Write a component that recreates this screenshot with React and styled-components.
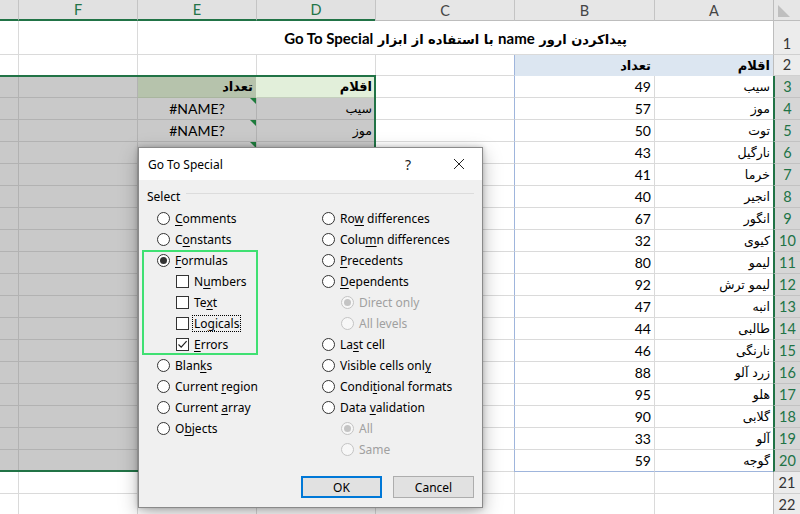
import React from 'react';
import styled, { createGlobalStyle } from 'styled-components';

const GREEN = '#217346';

const Global = createGlobalStyle`
  html, body { margin: 0; padding: 0; background: #fff; }
  body { width: 800px; height: 514px; overflow: hidden; }
`;

const Sheet = styled.div`
  position: relative;
  width: 800px;
  height: 514px;
  overflow: hidden;
  direction: rtl;
  background: #fff;
`;

const Grid = styled.div`
  position: relative;
  display: grid;
  grid-template-columns: 27px 119px 140px 139px 119px 119px 119px 119px;
  grid-template-rows: 21px 34px 21px repeat(20, 22px);
  font-family: Lato, "DejaVu Sans", sans-serif;
  font-size: 14px;
  color: #000;
`;

const Corner = styled.div`
  box-sizing: border-box;
  background: #e6e6e6;
  border-left: 1px solid #bdbdbd;
  border-bottom: 1px solid #bdbdbd;
  position: relative;
  svg { position: absolute; left: 3px; top: 4px; }
`;

const ColHead = styled.div`
  box-sizing: border-box;
  background: ${p => (p.$sel ? '#e1e1e1' : '#e6e6e6')};
  color: ${p => (p.$sel ? GREEN : '#444')};
  border-left: 1px solid #c4c4c4;
  border-bottom: ${p => (p.$sel ? `2px solid ${GREEN}` : '1px solid #bdbdbd')};
  display: flex;
  align-items: center;
  justify-content: center;
  font-size: 14.5px;
`;

const RowHead = styled.div`
  box-sizing: border-box;
  background: ${p => (p.$sel ? '#d6d6d6' : '#ececec')};
  color: ${p => (p.$sel ? GREEN : '#333')};
  border-left: ${p => (p.$sel ? `2px solid ${GREEN}` : '1px solid #bdbdbd')};
  border-bottom: 1px solid ${p => (p.$sel ? '#c2c2c2' : '#d0d0d0')};
  display: flex;
  align-items: flex-end;
  justify-content: center;
  padding-bottom: 2px;
  font-size: 14.5px;
`;

const Cell = styled.div`
  position: relative;
  box-sizing: border-box;
  background: ${p => p.$bg};
  border-left: 1px solid ${p => p.$left};
  border-bottom: 1px solid ${p => p.$bottom};
  display: flex;
  align-items: center;
  justify-content: ${p => (p.$center ? 'center' : 'flex-start')};
  padding: 0 3px;
  white-space: nowrap;
  overflow: hidden;
  font-weight: ${p => (p.$bold ? 700 : 400)};
`;

const TitleCell = styled(Cell)`
  grid-column: 2 / 7;
  justify-content: center;
  font-size: 15px;
  font-weight: 700;
`;

const Fa = styled.span`
  font-family: "DejaVu Sans", sans-serif;
  font-size: ${p => (p.$big ? '13px' : '12.5px')};
`;

const Ltr = styled.span`
  direction: ltr;
  unicode-bidi: isolate;
`;

const ErrorMark = styled.span`
  position: absolute;
  top: 0;
  right: 0;
  width: 0;
  height: 0;
  border-top: 6px solid #1e7b3c;
  border-left: 6px solid transparent;
`;

const Selection = styled.div`
  grid-row: 4 / 22;
  grid-column: 5 / 9;
  position: absolute;
  top: -1px;
  right: -1px;
  bottom: 0;
  left: 0;
  z-index: 2;
  border: 2px solid ${GREEN};
  pointer-events: none;
`;

/* ---------- dialog ---------- */

const Dialog = styled.div`
  position: absolute;
  left: 138px;
  top: 147px;
  width: 345px;
  height: 361px;
  box-sizing: border-box;
  border: 1px solid #8a8a8a;
  background: #f0f0f0;
  direction: ltr;
  display: flex;
  flex-direction: column;
  z-index: 10;
  box-shadow: 0 6px 18px rgba(0, 0, 0, 0.28), 0 0 5px rgba(0, 0, 0, 0.22);
  font-family: "Noto Sans", sans-serif;
  font-size: 12px;
  color: #000;
`;

const TitleBar = styled.div`
  height: 32px;
  background: #fff;
  display: flex;
  align-items: center;
  padding-left: 9px;
`;

const TitleText = styled.div`
  flex: 1;
`;

const TitleButton = styled.div`
  width: 46px;
  height: 32px;
  display: flex;
  align-items: center;
  justify-content: center;
  margin-left: ${p => (p.$gap ? '5px' : '0')};
  font-size: 14px;
  color: #222;
`;

const Body = styled.div`
  flex: 1;
  display: flex;
  flex-direction: column;
  padding: 6px 8px 9px 8px;
`;

const Legend = styled.div`
  display: flex;
  height: 20px;
  align-items: center;
`;

const LegendLine = styled.div`
  flex: 1;
  height: 1px;
  background: #dcdcdc;
  align-self: flex-start;
  margin: 7px 0 0 6px;
`;

const Options = styled.div`
  display: grid;
  grid-template-columns: 165px 1fr;
  margin-top: 2px;
  padding-left: 10px;
`;

const Column = styled.div`
  display: flex;
  flex-direction: column;
`;

const Group = styled.div`
  display: flex;
  flex-direction: column;
  margin-left: -15px;
  padding-left: 15px;
  width: 116px;
  box-sizing: border-box;
  outline: 2px solid #3fe072;
  outline-offset: -2px;
`;

const Row = styled.div`
  height: 21px;
  display: flex;
  align-items: center;
  gap: 5px;
  padding-left: ${p => (p.$indent ? '19px' : '0')};
  color: ${p => (p.$disabled ? '#a0a0a0' : '#000')};
  white-space: nowrap;
`;

const Radio = styled.span`
  width: 13px;
  height: 13px;
  box-sizing: border-box;
  border-radius: 50%;
  border: 1px solid ${p => (p.$disabled ? '#c4c4c4' : '#333')};
  background: ${p => (p.$disabled ? '#f7f7f7' : '#fff')};
  display: flex;
  align-items: center;
  justify-content: center;
  flex: none;
  &::after {
    content: '';
    width: 7px;
    height: 7px;
    border-radius: 50%;
    background: ${p => (p.$disabled ? '#c4c4c4' : '#333')};
    display: ${p => (p.$checked ? 'block' : 'none')};
  }
`;

const Box = styled.span`
  width: 13px;
  height: 13px;
  box-sizing: border-box;
  border: 1px solid #333;
  background: #fff;
  display: flex;
  align-items: center;
  justify-content: center;
  flex: none;
`;

const Text = styled.span`
  outline: ${p => (p.$focus ? '1px dotted #000' : 'none')};
  outline-offset: 0;
  padding: 0 1px;
  margin-left: -1px;
  line-height: 15px;
`;

const Key = styled.span`
  text-decoration: underline;
  text-underline-offset: 2px;
`;

const Footer = styled.div`
  margin-top: auto;
  display: flex;
  justify-content: flex-end;
  gap: 11px;
`;

const Button = styled.div`
  width: 81px;
  height: 22px;
  box-sizing: border-box;
  background: #e1e1e1;
  border: 1px solid ${p => (p.$primary ? '#0078d7' : '#adadad')};
  box-shadow: ${p => (p.$primary ? 'inset 0 0 0 1px #0078d7' : 'none')};
  display: flex;
  align-items: center;
  justify-content: center;
`;

const Label = ({ text }) => {
  const i = text.indexOf('&');
  if (i < 0) return text;
  return (
    <>
      {text.slice(0, i)}
      <Key>{text[i + 1]}</Key>
      {text.slice(i + 2)}
    </>
  );
};

const RadioRow = ({ text, checked, disabled, indent }) => (
  <Row $disabled={disabled} $indent={indent}>
    <Radio $checked={checked} $disabled={disabled} />
    <Text>
      <Label text={text} />
    </Text>
  </Row>
);

const CheckRow = ({ text, checked, focus }) => (
  <Row $indent>
    <Box>
      {checked && (
        <svg width="11" height="11" viewBox="0 0 11 11">
          <path d="M1.5 5.5 L4.2 8.2 L9.6 2.2" fill="none" stroke="#222" strokeWidth="1.2" />
        </svg>
      )}
    </Box>
    <Text $focus={focus}>
      <Label text={text} />
    </Text>
  </Row>
);

/* ---------- data ---------- */

const fruits = ['سیب', 'موز', 'توت', 'نارگیل', 'خرما', 'انجیر', 'انگور', 'کیوی', 'لیمو', 'لیمو ترش', 'انبه', 'طالبی', 'نارنگی', 'زرد آلو', 'هلو', 'گلابی', 'آلو', 'گوجه'];
const counts = [49, 57, 50, 43, 41, 40, 67, 32, 80, 92, 47, 44, 46, 88, 95, 90, 33, 59];
const cols = ['A', 'B', 'C', 'D', 'E', 'F', 'G'];
const selCols = new Set(['D', 'E', 'F', 'G']);
const TABLE = '#9fb5dc';

function cellInfo(r, c) {
  const sel = r >= 3 && r <= 20 && selCols.has(c);
  const info = {
    bg: sel ? '#c9c9c9' : '#fff',
    left: sel ? '#b2b2b2' : '#dadada',
    bottom: sel ? '#b2b2b2' : '#dadada',
    content: null,
    bold: false,
    center: false,
    err: false,
  };
  if (r === 2 && (c === 'A' || c === 'B')) {
    info.bg = '#dce6f1';
    info.left = '#dce6f1';
    info.bottom = '#dce6f1';
    info.bold = true;
    info.content = <Fa $big>{c === 'A' ? 'اقلام' : 'تعداد'}</Fa>;
  }
  if (r >= 3 && r <= 20) {
    if (c === 'A') info.content = <Fa>{fruits[r - 3]}</Fa>;
    if (c === 'B') info.content = counts[r - 3];
  }
  if (c === 'B' && r >= 2 && r <= 20) info.left = TABLE;
  if ((c === 'A' || c === 'B') && r === 20) info.bottom = TABLE;
  if (r === 3 && c === 'D') {
    info.bg = '#e2efda';
    info.left = '#e2efda';
    info.bottom = '#c4cfbd';
    info.bold = true;
    info.content = <Fa $big>اقلام</Fa>;
  }
  if (r === 3 && c === 'E') {
    info.bg = '#b6c3ac';
    info.bottom = '#a9b59f';
    info.bold = true;
    info.content = <Fa $big>تعداد</Fa>;
  }
  if (r >= 4 && r <= 20 && c === 'D') info.content = <Fa>{fruits[r - 4]}</Fa>;
  if (r >= 4 && r <= 20 && c === 'E') {
    info.content = <Ltr>#NAME?</Ltr>;
    info.center = true;
    info.err = true;
  }
  return info;
}

const rows = Array.from({ length: 21 }, (_, i) => i + 2);

export default function App() {
  return (
    <>
      <Global />
      <Sheet>
        <Grid>
          <Corner>
            <svg width="14" height="14" viewBox="0 0 14 14">
              <path d="M1 1 L1 13 L13 13 Z" fill="#bfbfbf" />
            </svg>
          </Corner>
          {cols.map(c => (
            <ColHead key={c} $sel={selCols.has(c)}>
              {c}
            </ColHead>
          ))}

          <RowHead>1</RowHead>
          <TitleCell $bg="#fff" $left="#dadada" $bottom="#dadada">
            <span>
              <Fa $big>پیداکردن ارور </Fa>name<Fa $big> با استفاده از ابزار </Fa>Go To Special
            </span>
          </TitleCell>
          <Cell $bg="#fff" $left="#dadada" $bottom="#dadada" />
          <Cell $bg="#fff" $left="#dadada" $bottom="#dadada" />

          {rows.map(r => (
            <React.Fragment key={r}>
              <RowHead $sel={r >= 3 && r <= 20}>{r}</RowHead>
              {cols.map(c => {
                const info = cellInfo(r, c);
                return (
                  <Cell
                    key={c}
                    $bg={info.bg}
                    $left={info.left}
                    $bottom={info.bottom}
                    $bold={info.bold}
                    $center={info.center}
                  >
                    {info.err && <ErrorMark />}
                    {info.content}
                  </Cell>
                );
              })}
            </React.Fragment>
          ))}
          <Selection />
        </Grid>

        <Dialog>
          <TitleBar>
            <TitleText>Go To Special</TitleText>
            <TitleButton>?</TitleButton>
            <TitleButton $gap>
              <svg width="12" height="12" viewBox="0 0 12 12">
                <path d="M1 1 L11 11 M11 1 L1 11" stroke="#222" strokeWidth="1" fill="none" />
              </svg>
            </TitleButton>
          </TitleBar>
          <Body>
            <Legend>
              <span>Select</span>
              <LegendLine />
            </Legend>
            <Options>
              <Column>
                <RadioRow text="&Comments" />
                <RadioRow text="C&onstants" />
                <Group>
                  <RadioRow text="&Formulas" checked />
                  <CheckRow text="N&umbers" />
                  <CheckRow text="Te&xt" />
                  <CheckRow text="Lo&gicals" focus />
                  <CheckRow text="&Errors" checked />
                </Group>
                <RadioRow text="Blan&ks" />
                <RadioRow text="Current &region" />
                <RadioRow text="Current &array" />
                <RadioRow text="O&bjects" />
              </Column>
              <Column>
                <RadioRow text="Ro&w differences" />
                <RadioRow text="Colu&mn differences" />
                <RadioRow text="&Precedents" />
                <RadioRow text="&Dependents" />
                <RadioRow text="Direct only" checked disabled indent />
                <RadioRow text="All levels" disabled indent />
                <RadioRow text="La&st cell" />
                <RadioRow text="Visible cells onl&y" />
                <RadioRow text="Condi&tional formats" />
                <RadioRow text="Data &validation" />
                <RadioRow text="All" checked disabled indent />
                <RadioRow text="Same" disabled indent />
              </Column>
            </Options>
            <Footer>
              <Button $primary>OK</Button>
              <Button>Cancel</Button>
            </Footer>
          </Body>
        </Dialog>
      </Sheet>
    </>
  );
}
